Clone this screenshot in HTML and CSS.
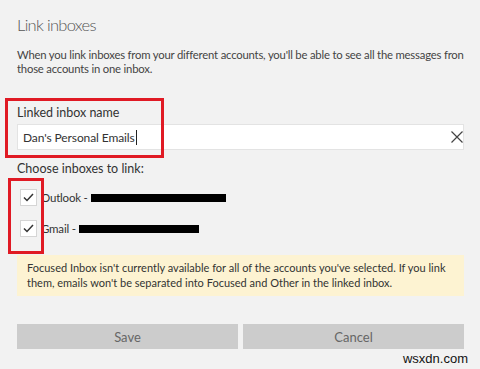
FILE: index.html
```html
<!DOCTYPE html>
<html lang="en">
<head>
    <meta charset="UTF-8">
    <meta name="viewport" content="width=device-width, initial-scale=1.0">
    <title>Link inboxes</title>
    <link rel="stylesheet" href="styles.css">
</head>
<body>
    <div id="dialog">
        <h2 class="title">Link inboxes</h2>
        <p class="intro">When you link inboxes from your different accounts, you'll be able to see all the messages fron<br>those accounts in one inbox.</p>

        <div class="field">
            <label class="field-label" for="name-input">Linked inbox name</label>
            <div class="input-wrap">
                <input type="text" id="name-input" value="Dan's Personal Emails">
                <span class="caret"></span>
                <svg class="clear-icon" width="12" height="12" viewBox="0 0 12 12">
                    <path d="M0.5 0.5 L11.5 11.5 M11.5 0.5 L0.5 11.5" stroke="#444" stroke-width="1.2" fill="none"/>
                </svg>
            </div>
            <div class="highlight highlight-name"></div>
        </div>

        <div class="field field-accounts">
            <div class="field-label">Choose inboxes to link:</div>
            <div class="accounts">
                <div class="account">
                    <span class="check">
                        <svg width="11" height="9" viewBox="0 0 11 9"><path d="M1 4.5 L4 7.5 L10 1" stroke="#333" stroke-width="1.5" fill="none"/></svg>
                    </span>
                    <span class="account-name">Outlook -</span>
                    <span class="redact redact-outlook"></span>
                </div>
                <div class="account">
                    <span class="check">
                        <svg width="11" height="9" viewBox="0 0 11 9"><path d="M1 4.5 L4 7.5 L10 1" stroke="#333" stroke-width="1.5" fill="none"/></svg>
                    </span>
                    <span class="account-name">Gmail -</span>
                    <span class="redact redact-gmail"></span>
                </div>
                <div class="highlight highlight-checks"></div>
            </div>
        </div>

        <div class="notice">
            Focused Inbox isn't currently available for all of the accounts you've selected. If you link<br>them, emails won't be separated into Focused and Other in the linked inbox.
        </div>

        <div class="actions">
            <button id="save-btn">Save</button>
            <button id="cancel-btn">Cancel</button>
        </div>
    </div>
    <div class="watermark">wsxdn.com</div>
</body>
</html>
```

FILE: styles.css
```css
body {
    margin: 0;
    padding: 0;
    width: 480px;
    height: 369px;
    overflow: hidden;
    position: relative;
    background-color: #f2f2f2;
    font-family: Lato, "Open Sans", sans-serif;
    color: #333;
}

#dialog {
    padding: 14px 16px 0 17px;
}

.title {
    margin: 0;
    font-size: 16.5px;
    font-weight: 300;
    letter-spacing: -0.7px;
    color: #555;
    line-height: 22px;
}

.intro {
    margin: 12px 0 0 0;
    font-size: 11.3px;
    letter-spacing: -0.2px;
    line-height: 14px;
    color: #444;
    white-space: nowrap;
}

.field {
    position: relative;
    margin-top: 29px;
}

.field-label {
    display: block;
    font-size: 12.5px;
    line-height: 16px;
    color: #333;
}

.input-wrap {
    position: relative;
    margin-top: 3px;
    display: flex;
    align-items: center;
    height: 26px;
    background-color: #fff;
    border: 1px solid #e3e3e3;
    box-sizing: border-box;
}

#name-input {
    border: none;
    outline: none;
    background: transparent;
    font-family: Lato, "Open Sans", sans-serif;
    font-size: 12px;
    letter-spacing: -0.1px;
    color: #333;
    padding: 0 0 0 5px;
    width: 113px;
}

.caret {
    width: 1px;
    height: 15px;
    background-color: #222;
}

.clear-icon {
    margin-left: auto;
    margin-right: 0;
}

.highlight {
    position: absolute;
    border: 3px solid #e01a24;
    box-sizing: border-box;
}

.highlight-name {
    left: -12px;
    top: -7px;
    width: 159px;
    height: 60px;
}

.field-accounts {
    margin-top: 11px;
}

.accounts {
    position: relative;
    margin-top: 5px;
}

.account {
    display: flex;
    align-items: center;
    height: 31px;
}

.check {
    display: flex;
    align-items: center;
    justify-content: center;
    width: 15px;
    height: 15px;
    margin-left: 3px;
    background-color: #fff;
    border: 1px solid #d5d5d5;
}

.account-name {
    margin-left: 4px;
    margin-right: 3px;
    font-size: 11.5px;
    letter-spacing: -0.2px;
    white-space: pre;
}

.redact {
    display: inline-block;
    height: 8px;
    background-color: #000;
}

.redact-outlook {
    width: 135px;
}

.redact-gmail {
    width: 120px;
}

.highlight-checks {
    left: -9px;
    top: -4px;
    width: 36px;
    height: 76px;
}

.notice {
    margin-top: 11px;
    padding: 5px 10px 6px 10px;
    background-color: #fdf3d2;
    font-size: 11px;
    line-height: 15px;
    color: #333;
    white-space: nowrap;
}

.actions {
    display: flex;
    gap: 5px;
    margin-top: 28px;
}

.actions button {
    flex: 1;
    height: 25px;
    border: none;
    background-color: #cccccc;
    color: #666;
    font-family: Lato, "Open Sans", sans-serif;
    font-size: 13px;
}

.watermark {
    position: absolute;
    right: 12px;
    bottom: 3px;
    font-family: "Liberation Sans", Arial, sans-serif;
    font-size: 13px;
    color: #111;
}
```
